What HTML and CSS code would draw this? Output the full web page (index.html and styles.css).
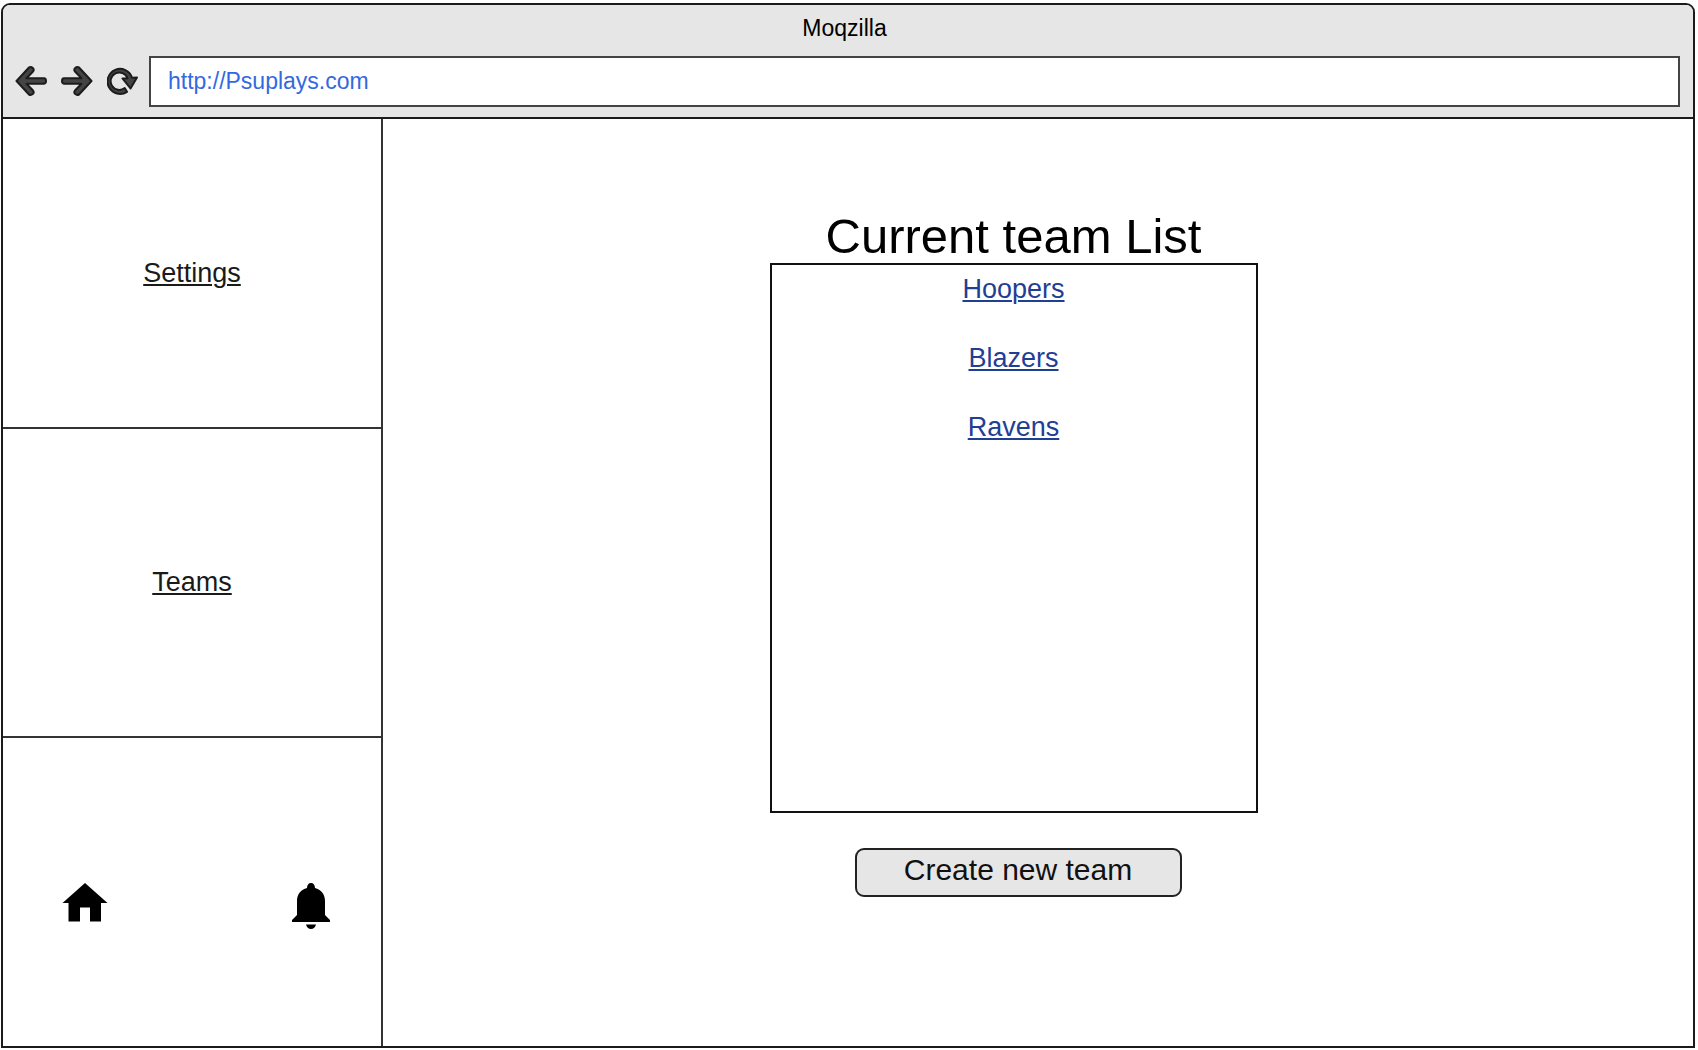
FILE: index.html
```html
<!DOCTYPE html>
<html lang="en">
<head>
<meta charset="utf-8">
<meta name="viewport" content="width=device-width, initial-scale=1">
<title>Moqzilla</title>
<link rel="stylesheet" href="styles.css">
</head>
<body>
<div class="window">
  <header class="chrome">
    <div class="chrome-title">Moqzilla</div>
    <div class="toolbar">
      <div class="tools">
        <button class="tool" type="button" aria-label="Back">
          <svg width="32" height="30" viewBox="0 0 32 30"><path d="M1.500 15L14 1.500Q16 .5 17.800 2Q19.500 3.500 18 5.500L11.500 12.300H29Q31 12.500 31 15Q31 17.500 29 17.700H11.500L18 24.500Q19.500 26.500 17.800 28Q16 29.500 14 28.500Z"/></svg>
        </button>
        <button class="tool" type="button" aria-label="Forward">
          <svg width="32" height="30" viewBox="0 0 32 30"><path d="M30.500 15L18 1.500Q16 .5 14.200 2Q12.500 3.500 14 5.500L20.500 12.300H3Q1 12.500 1 15Q1 17.500 3 17.700H20.500L14 24.500Q12.500 26.500 14.200 28Q16 29.500 18 28.500Z"/></svg>
        </button>
        <button class="tool" type="button" aria-label="Reload">
          <svg width="32" height="30" viewBox="0 0 32 30"><path d="M30 11.500L23.500 22.500L15.500 12.500L20.500 12.200A8.700 8.700 0 1 0 17.700 22L20 25.800A12.500 12.500 0 1 1 25 11.700Z"/></svg>
        </button>
      </div>
      <input class="address" type="text" aria-label="Address" value="http://Psuplays.com" spellcheck="false">
    </div>
  </header>
  <div class="page">
    <nav class="sidebar">
      <div class="cell"><a href="#settings">Settings</a></div>
      <div class="cell"><a href="#teams">Teams</a></div>
      <div class="cell shortcuts">
        <a href="#home" aria-label="Home">
          <svg width="46" height="46" viewBox="0 0 46 46"><path d="M23 0L45.500 20H39V38.500H28V24.500H18V38.500H6.500V20H.5Z"/></svg>
        </a>
        <a href="#notifications" aria-label="Notifications">
          <svg width="40" height="46" viewBox="0 0 40 46"><path d="M20 0C22.500 0 24 2 24 5C30 6.500 34 11 34 18V32L39 37V39H1V37L6 32V18C6 11 10 6.500 16 5C16 2 17.500 0 20 0ZM15 41.500H25C24.500 44 22.500 46 20 46S15.500 44 15 41.500Z"/></svg>
        </a>
      </div>
    </nav>
    <main class="content">
      <section class="teams">
        <h1>Current team List</h1>
        <ul class="team-list">
          <li><a href="#hoopers">Hoopers</a></li>
          <li><a href="#blazers">Blazers</a></li>
          <li><a href="#ravens">Ravens</a></li>
        </ul>
        <div class="actions">
          <button class="create" type="button">Create new team</button>
        </div>
      </section>
    </main>
  </div>
</div>
</body>
</html>
```
FILE: styles.css
```css
* {
  box-sizing: border-box;
}

body {
  display: flex;
  flex-direction: column;
  min-height: 100vh;
  margin: 0;
  padding: 3px 3px 2px 1px;
  background: #fff;
  color: #000;
  font-family: "Liberation Sans", Arial, sans-serif;
  font-size: 27px;
  line-height: 32px;
}

svg {
  display: block;
}

.window {
  flex: 1;
  display: flex;
  flex-direction: column;
  border: 2px solid #1c1a1b;
  border-radius: 9px 9px 0 0;
  overflow: hidden;
}

.chrome {
  padding: 9px 13px 10px 12px;
  background: #e6e6e6;
  border-bottom: 2px solid #1c1a1b;
}

.chrome-title {
  padding: 0 6px 14px 0;
  font-size: 23px;
  line-height: 28px;
  text-align: center;
}

.toolbar {
  display: flex;
  align-items: center;
  gap: 10px;
}

.tools {
  display: flex;
  gap: 14px;
  padding-bottom: 2px;
}

.tool {
  padding: 0;
  border: 0;
  background: none;
}

.tool path {
  fill: #444;
  stroke: #1c1c1c;
  stroke-width: 2px;
  stroke-linejoin: round;
}

.address {
  flex: 1;
  min-width: 0;
  height: 51px;
  padding: 0 17px;
  border: 2px solid #444;
  border-radius: 0;
  background: #fff;
  color: #3369e0;
  font: inherit;
  font-size: 23px;
}

.page {
  flex: 1;
  display: flex;
}

.sidebar {
  flex: none;
  display: grid;
  grid-template-rows: repeat(3, 1fr);
  gap: 2px;
  width: 380px;
  border-right: 2px solid #333;
}

.cell {
  display: flex;
  align-items: center;
  justify-content: center;
  box-shadow: 0 2px #333;
}

.cell a {
  color: #1a1a1a;
}

.cell path {
  fill: #000;
}

.shortcuts {
  justify-content: space-between;
  padding: 28px 50px 0 59px;
}

.content {
  flex: 1;
  display: flex;
  justify-content: center;
  padding: 90px 49px 0 0;
}

.teams {
  width: 488px;
}

h1 {
  margin: 0;
  font-size: 49px;
  font-weight: 400;
  line-height: 54px;
  text-align: center;
}

.team-list {
  display: flex;
  flex-direction: column;
  gap: 37px;
  min-height: 550px;
  margin: 0;
  padding: 8px 0;
  border: 2px solid #111;
  list-style: none;
  text-align: center;
}

.team-list a {
  color: #1f3f94;
}

.cell a,
.team-list a {
  text-decoration-thickness: 2px;
  text-underline-offset: 2px;
}

.actions {
  padding: 35px 0 0 85px;
}

.create {
  width: 327px;
  height: 49px;
  padding: 0 0 6px;
  border: 2px solid #222;
  border-radius: 9px;
  background: #e6e6e6;
  color: #111;
  font: inherit;
  font-size: 30px;
}
```
